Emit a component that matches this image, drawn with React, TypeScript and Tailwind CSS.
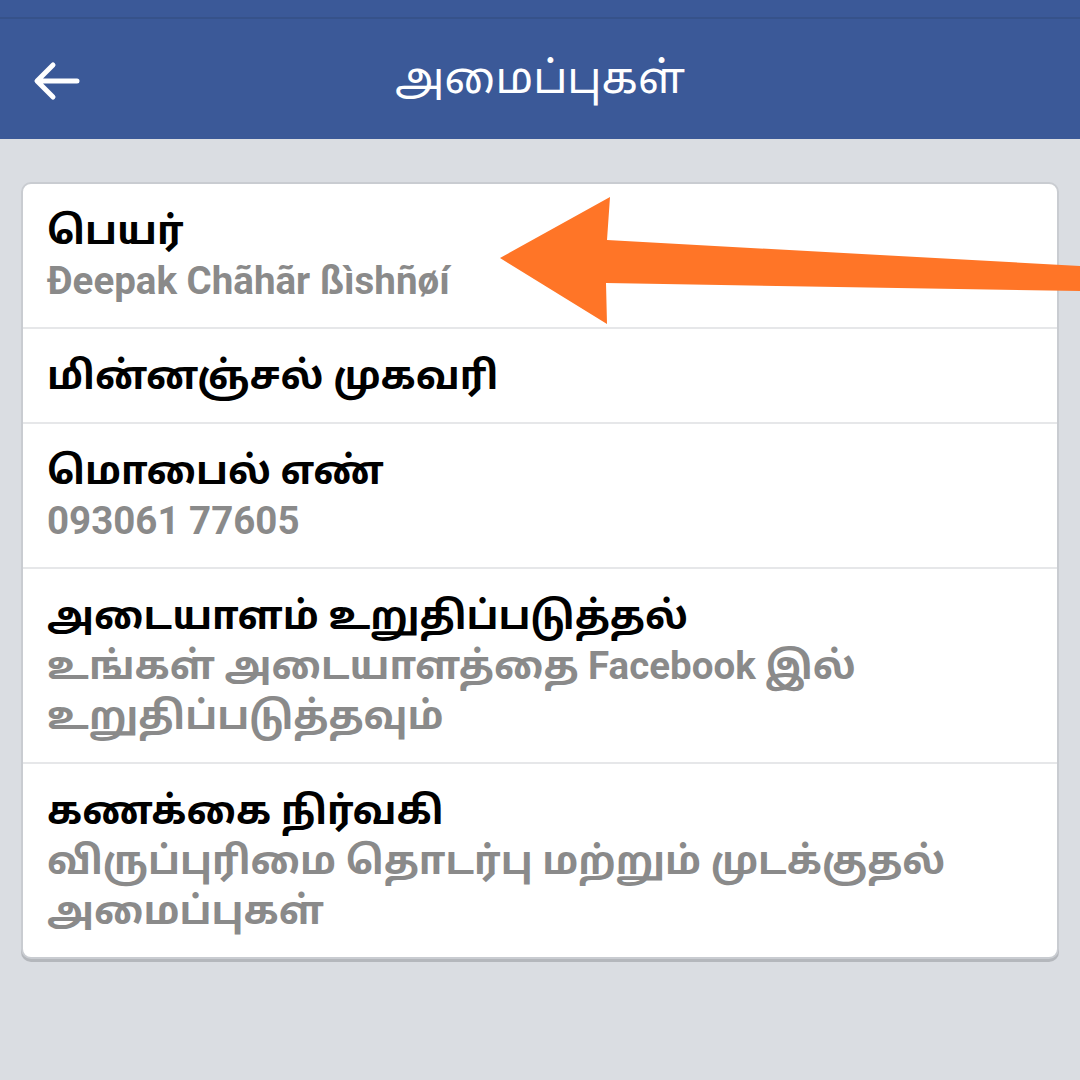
import React from 'react';

interface SettingRow {
  title: string;
  subtitle?: string;
}

const rows: SettingRow[] = [
  { title: 'பெயர்', subtitle: 'Đeepak Chãhãr ßìshñøí' },
  { title: 'மின்னஞ்சல் முகவரி' },
  { title: 'மொபைல் எண்', subtitle: '093061 77605' },
  { title: 'அடையாளம் உறுதிப்படுத்தல்', subtitle: 'உங்கள் அடையாளத்தை Facebook இல் உறுதிப்படுத்தவும்' },
  { title: 'கணக்கை நிர்வகி', subtitle: 'விருப்புரிமை தொடர்பு மற்றும் முடக்குதல் அமைப்புகள்' },
];

const font = { fontFamily: 'Roboto, "Noto Sans", "Noto Sans Tamil", sans-serif' };

function SettingItem({ row, last }: { row: SettingRow; last: boolean }) {
  return (
    <div className={`pl-[24px] pr-[10px] py-[21.5px] ${last ? '' : 'border-b-2 border-[#e6e7e9]'}`}>
      <div className="text-[38.5px] leading-[50px] font-bold text-black">{row.title}</div>
      {row.subtitle && (
        <div className="text-[38.5px] leading-[50px] font-bold text-[#8a8a8a]">{row.subtitle}</div>
      )}
    </div>
  );
}

export default function App() {
  return (
    <div className="relative w-[1080px] h-[1080px] bg-[#dadde2] overflow-hidden" style={font}>
      <div className="h-[19px] bg-[#3b5998] border-b-2 border-[#36528a]" />
      <div className="relative h-[120px] bg-[#3b5998] flex items-center justify-center">
        <svg className="absolute left-[33px] top-[42px]" width="48" height="40" viewBox="0 0 48 40" fill="none">
          <path d="M44 20H5M20 4L4 20l16 16" stroke="white" strokeWidth="5" strokeLinecap="round" strokeLinejoin="round" />
        </svg>
        <span className="text-white text-[44px] -mt-[2px]">அமைப்புகள்</span>
      </div>

      <div className="px-[21px] pt-[43px]">
        <div className="bg-white rounded-[10px] border-2 border-[#c9ccd1] shadow-[0_3px_0_#b4b7bc] overflow-hidden">
          {rows.map((row, i) => (
            <SettingItem key={i} row={row} last={i === rows.length - 1} />
          ))}
        </div>
      </div>

      <svg className="absolute left-0 top-0 pointer-events-none" width="1080" height="1080" viewBox="0 0 1080 1080">
        <polygon
          points="500,258 610,197 607,240 1080,266 1080,291 606,283 607,324"
          fill="#ff7527"
        />
      </svg>
    </div>
  );
}
